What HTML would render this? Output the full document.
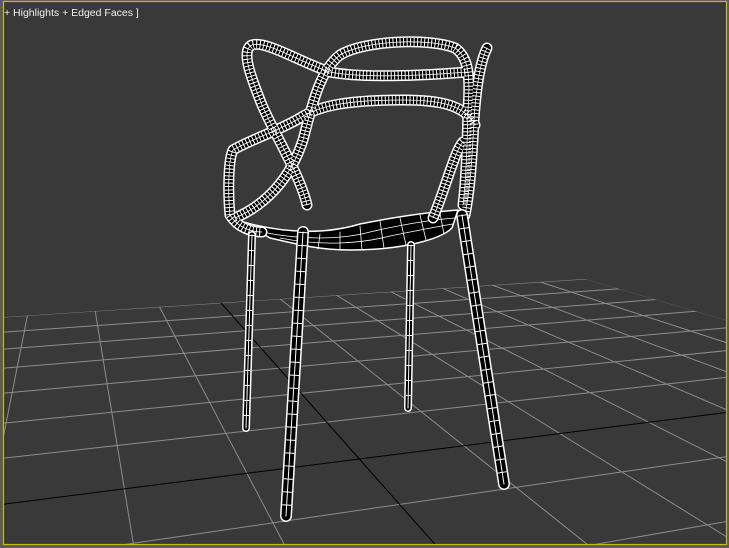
<!DOCTYPE html>
<html><head><meta charset="utf-8"><style>
html,body{margin:0;padding:0;width:729px;height:548px;overflow:hidden;background:#6a6560;}
svg{display:block;overflow:hidden}
</style></head><body>
<svg width="729" height="548" viewBox="0 0 729 548" xmlns="http://www.w3.org/2000/svg">
<defs>
<clipPath id="g"><polygon points="-10,318 585,279 2030,700 -10,700"/></clipPath>
<clipPath id="vp"><rect x="4" y="2" width="722" height="542"/></clipPath>
</defs>
<rect x="0" y="0" width="729" height="548" fill="#5e5a55"/>
<rect x="3.5" y="1.5" width="723" height="543" fill="#393939" stroke="#c4bd0a" stroke-width="1.2"/>
<g clip-path="url(#vp)">
<g clip-path="url(#g)" stroke="#8c8c8c" stroke-width="1" fill="none">
<line x1="65" y1="127" x2="-49" y2="700"/>
<line x1="65" y1="127" x2="159" y2="700"/>
<line x1="65" y1="127" x2="366" y2="700"/>
<line x1="65" y1="127" x2="782" y2="700"/>
<line x1="65" y1="127" x2="990" y2="700"/>
<line x1="65" y1="127" x2="1198" y2="700"/>
<line x1="65" y1="127" x2="1406" y2="700"/>
<line x1="65" y1="127" x2="1614" y2="700"/>
<line x1="65" y1="127" x2="1822" y2="700"/>
<line x1="65" y1="127" x2="2030" y2="700"/>
<line x1="3046" y1="118" x2="0" y2="317.3"/>
<line x1="3046" y1="118" x2="0" y2="332.4"/>
<line x1="3046" y1="118" x2="0" y2="349.4"/>
<line x1="3046" y1="118" x2="0" y2="368.4"/>
<line x1="3046" y1="118" x2="0" y2="393.5"/>
<line x1="3046" y1="118" x2="0" y2="423.5"/>
<line x1="3046" y1="118" x2="0" y2="458.6"/>
<line x1="3046" y1="118" x2="0" y2="562.7"/>
<line x1="3046" y1="118" x2="0" y2="647.9"/>
<line x1="65" y1="127" x2="573" y2="700" stroke="#000"/>
<line x1="3046" y1="118" x2="0" y2="504.6" stroke="#000"/>
</g>
</g>
<text x="4" y="16" font-family="Liberation Sans, sans-serif" font-size="10.5" fill="#f0f0f0">+ Highlights + Edged Faces ]</text>

<g fill="none" stroke-linecap="round" stroke-linejoin="round">
<path d="M243,222 C280,232 320,236 360,224 C400,216 430,212 458,210 L452,228 C440,240 400,250 350,250 C320,250 300,245 270,238 Z" fill="#000" stroke="#fff" stroke-width="1.5"/>
<g stroke="#fff" stroke-width="0.8">
<path d="M262,232 C300,240 340,240 370,232 C400,225 430,220 455,218"/>
<path d="M280,238 C320,246 360,244 390,236 C420,230 440,226 453,224"/>
<path d="M300,232 L298,246 M320,234 L318,249 M340,232 L340,250 M360,226 L362,250 M380,221 L384,248 M400,218 L406,245 M420,215 L426,240 M440,213 L444,234"/>
</g>
<g id="tubes">
<path d="M307,205 C300,175 275,135 262,105 C252,80 240,50 252,45 C265,40 300,62 330,72 C360,78 420,76 467,72"/>
<path d="M235,218 C265,205 290,180 303,140 C312,105 320,70 340,55 C365,40 430,38 455,48 C470,58 470,80 468,110 C467,150 466,180 463,205"/>
<path d="M230,215 C228,195 228,160 233,150 C250,140 280,130 300,118 C320,105 350,100 403,100 C440,100 465,105 475,125"/>
<path d="M487,48 C480,62 476,90 474,120 C472,160 470,190 465,215"/>
<path d="M463,142 C455,150 445,190 433,218"/>
<path d="M230,215 C238,228 252,232 262,232"/>
</g>
<use href="#tubes" stroke="#fff" stroke-width="11"/>
<use href="#tubes" stroke="#000" stroke-width="8"/>
<use href="#tubes" stroke="#fff" stroke-width="8" stroke-dasharray="1 2.5" stroke-linecap="butt"/>
<use href="#tubes" stroke="#fff" stroke-width="0.8"/>
<g id="legs">
<path d="M303,232 L286,516"/>
<path d="M252,235 L246,428"/>
<path d="M411,245 L408,408"/>
<path d="M462,215 L504,484"/>
</g>
<g stroke="#fff" stroke-width="12">
<path d="M303,232 L286,516"/><path d="M462,215 L504,484"/>
</g>
<g stroke="#fff" stroke-width="8">
<path d="M252,235 L246,428"/><path d="M411,245 L408,408"/>
</g>
<g stroke="#000" stroke-width="9">
<path d="M303,232 L286,516"/><path d="M462,215 L504,484"/>
</g>
<g stroke="#000" stroke-width="5">
<path d="M252,235 L246,428"/><path d="M411,245 L408,408"/>
</g>
<use href="#legs" stroke="#fff" stroke-width="1"/>
<g stroke="#fff" stroke-width="9" stroke-dasharray="1 12" stroke-linecap="butt">
<path d="M303,232 L286,516"/><path d="M462,215 L504,484"/>
</g>
<g stroke="#fff" stroke-width="5" stroke-dasharray="1 14" stroke-linecap="butt">
<path d="M252,235 L246,428"/><path d="M411,245 L408,408"/>
</g>
</g>
</svg>
</body></html>
